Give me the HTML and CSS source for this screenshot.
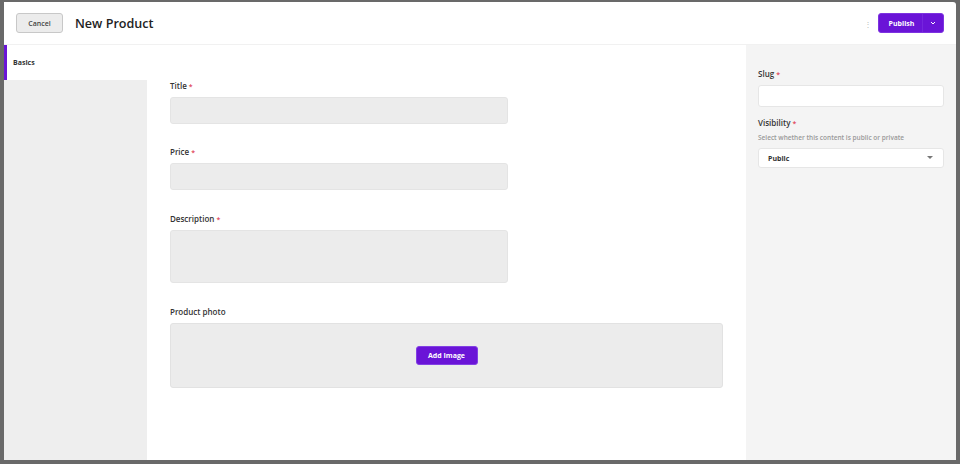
FILE: index.html
```html
<!DOCTYPE html>
<html lang="en">
<head>
    <meta charset="UTF-8">
    <title>New Product</title>
    <link rel="stylesheet" href="styles.css">
</head>
<body>
    <div class="frame">
        <div class="modal">
            <!-- Top bar -->
            <div class="topbar">
                <button class="btn-cancel">Cancel</button>
                <h1>New Product</h1>
                <span class="more">&#8942;</span>
                <div class="publish">
                    <span class="publish-label">Publish</span>
                    <span class="publish-caret">
                        <svg width="6" height="4" viewBox="0 0 6 4"><path d="M1 1l2 2 2-2" fill="none" stroke="#fff" stroke-width="1"/></svg>
                    </span>
                </div>
            </div>

            <div class="content">
                <div class="sidebar">
                    <div class="tab active">Basics</div>
                </div>

                <div class="main">
                    <div class="field">
                        <label>Title <span class="req">*</span></label>
                        <div class="input"></div>
                    </div>
                    <div class="field">
                        <label>Price <span class="req">*</span></label>
                        <div class="input"></div>
                    </div>
                    <div class="field field-desc">
                        <label>Description <span class="req">*</span></label>
                        <div class="input textarea"></div>
                    </div>
                    <div class="field field-photo">
                        <label>Product photo</label>
                        <div class="photo">
                            <button class="btn-primary">Add Image</button>
                        </div>
                    </div>
                </div>

                <div class="aside">
                    <label>Slug <span class="req">*</span></label>
                    <div class="input-white"></div>
                    <label class="mt">Visibility <span class="req">*</span></label>
                    <p class="help">Select whether this content is public or private</p>
                    <div class="select">
                        <span>Public</span>
                        <svg width="6" height="4" viewBox="0 0 6 4"><path d="M0 0h6L3 3z" fill="#777"/></svg>
                    </div>
                </div>
            </div>
        </div>
    </div>
</body>
</html>
```

FILE: styles.css
```css
/* Base */
* {
    box-sizing: border-box;
}

body {
    margin: 0;
    background-color: #696969;
    font-family: 'Open Sans', 'Noto Sans', sans-serif;
    color: #333;
}

.frame {
    height: 464px;
    padding: 2px 4px 4px 4px;
}

.modal {
    height: 458px;
    background-color: #fff;
    display: flex;
    flex-direction: column;
    border-radius: 0 3px 0 0;
    overflow: hidden;
}

/* Top bar */
.topbar {
    height: 43px;
    flex: none;
    display: flex;
    align-items: center;
    padding: 0 12px;
    border-bottom: 1px solid #f1f1f1;
}

.btn-cancel {
    width: 47px;
    height: 20px;
    font-family: inherit;
    font-size: 7px;
    font-weight: 600;
    color: #444;
    background-color: #ececec;
    border: 1px solid #c8c8c8;
    border-radius: 3px;
    padding: 0;
}

h1 {
    margin: 0 0 0 12px;
    font-size: 12.6px;
    font-weight: 600;
    color: #222;
}

.more {
    margin-left: auto;
    margin-right: 6px;
    font-size: 8px;
    color: #bbb;
}

.publish {
    width: 66px;
    height: 20px;
    display: flex;
    align-items: center;
    background-color: #6a14d7;
    border: 1px solid #7d33e0;
    border-radius: 3px;
    color: #fff;
    font-size: 7px;
    font-weight: 700;
}

.publish-label {
    flex: 1;
    text-align: center;
    padding-left: 2px;
}

.publish-caret {
    width: 21px;
    height: 100%;
    display: flex;
    align-items: center;
    justify-content: center;
    border-left: 1px solid #7526dd;
}

/* Body */
.content {
    flex: 1;
    display: flex;
}

.sidebar {
    width: 143px;
    background-color: #eeeeee;
}

.tab {
    height: 35px;
    display: flex;
    align-items: center;
    padding-left: 6px;
    background-color: #fff;
    border-left: 3px solid #6a14d7;
    font-size: 7px;
    font-weight: 700;
    color: #333;
}

.main {
    flex: 1;
    padding: 35px 23px 0 23px;
}

label {
    display: block;
    height: 12px;
    line-height: 12px;
    font-size: 8px;
    font-weight: 600;
    color: #333;
}

.req {
    color: #e0475a;
    font-size: 7px;
}

.field {
    margin-bottom: 22px;
}

.field label {
    margin-bottom: 5px;
}

.field-desc {
    margin-top: 23px;
}

.field-photo {
    margin-top: 23px;
}

.input {
    width: 338px;
    height: 27px;
    background-color: #ececec;
    border: 1px solid #e4e4e4;
    border-radius: 3px;
}

.textarea {
    height: 53px;
}

.photo {
    width: 553px;
    height: 65px;
    display: flex;
    align-items: center;
    justify-content: center;
    background-color: #ececec;
    border: 1px solid #e2e2e2;
    border-radius: 3px;
}

.btn-primary {
    width: 62px;
    height: 19px;
    padding: 0;
    font-family: inherit;
    font-size: 7px;
    font-weight: 700;
    color: #fff;
    background-color: #6a14d7;
    border: 1px solid #8240e4;
    border-radius: 3px;
}

/* Right panel */
.aside {
    width: 210px;
    padding: 23px 12px 0 12px;
    background-color: #f4f4f4;
}

.aside label {
    margin-bottom: 5px;
}

.aside label.mt {
    margin-top: 10px;
    margin-bottom: 4px;
}

.input-white {
    height: 22px;
    background-color: #fff;
    border: 1px solid #e6e6e6;
    border-radius: 3px;
}

.help {
    margin: 0 0 5px 0;
    font-size: 6.5px;
    line-height: 10px;
    color: #999;
    font-weight: 600;
}

.select {
    height: 20px;
    display: flex;
    align-items: center;
    justify-content: space-between;
    padding: 0 10px 0 9px;
    background-color: #fff;
    border: 1px solid #e6e6e6;
    border-radius: 3px;
    font-size: 7px;
    font-weight: 700;
    color: #333;
}
```
